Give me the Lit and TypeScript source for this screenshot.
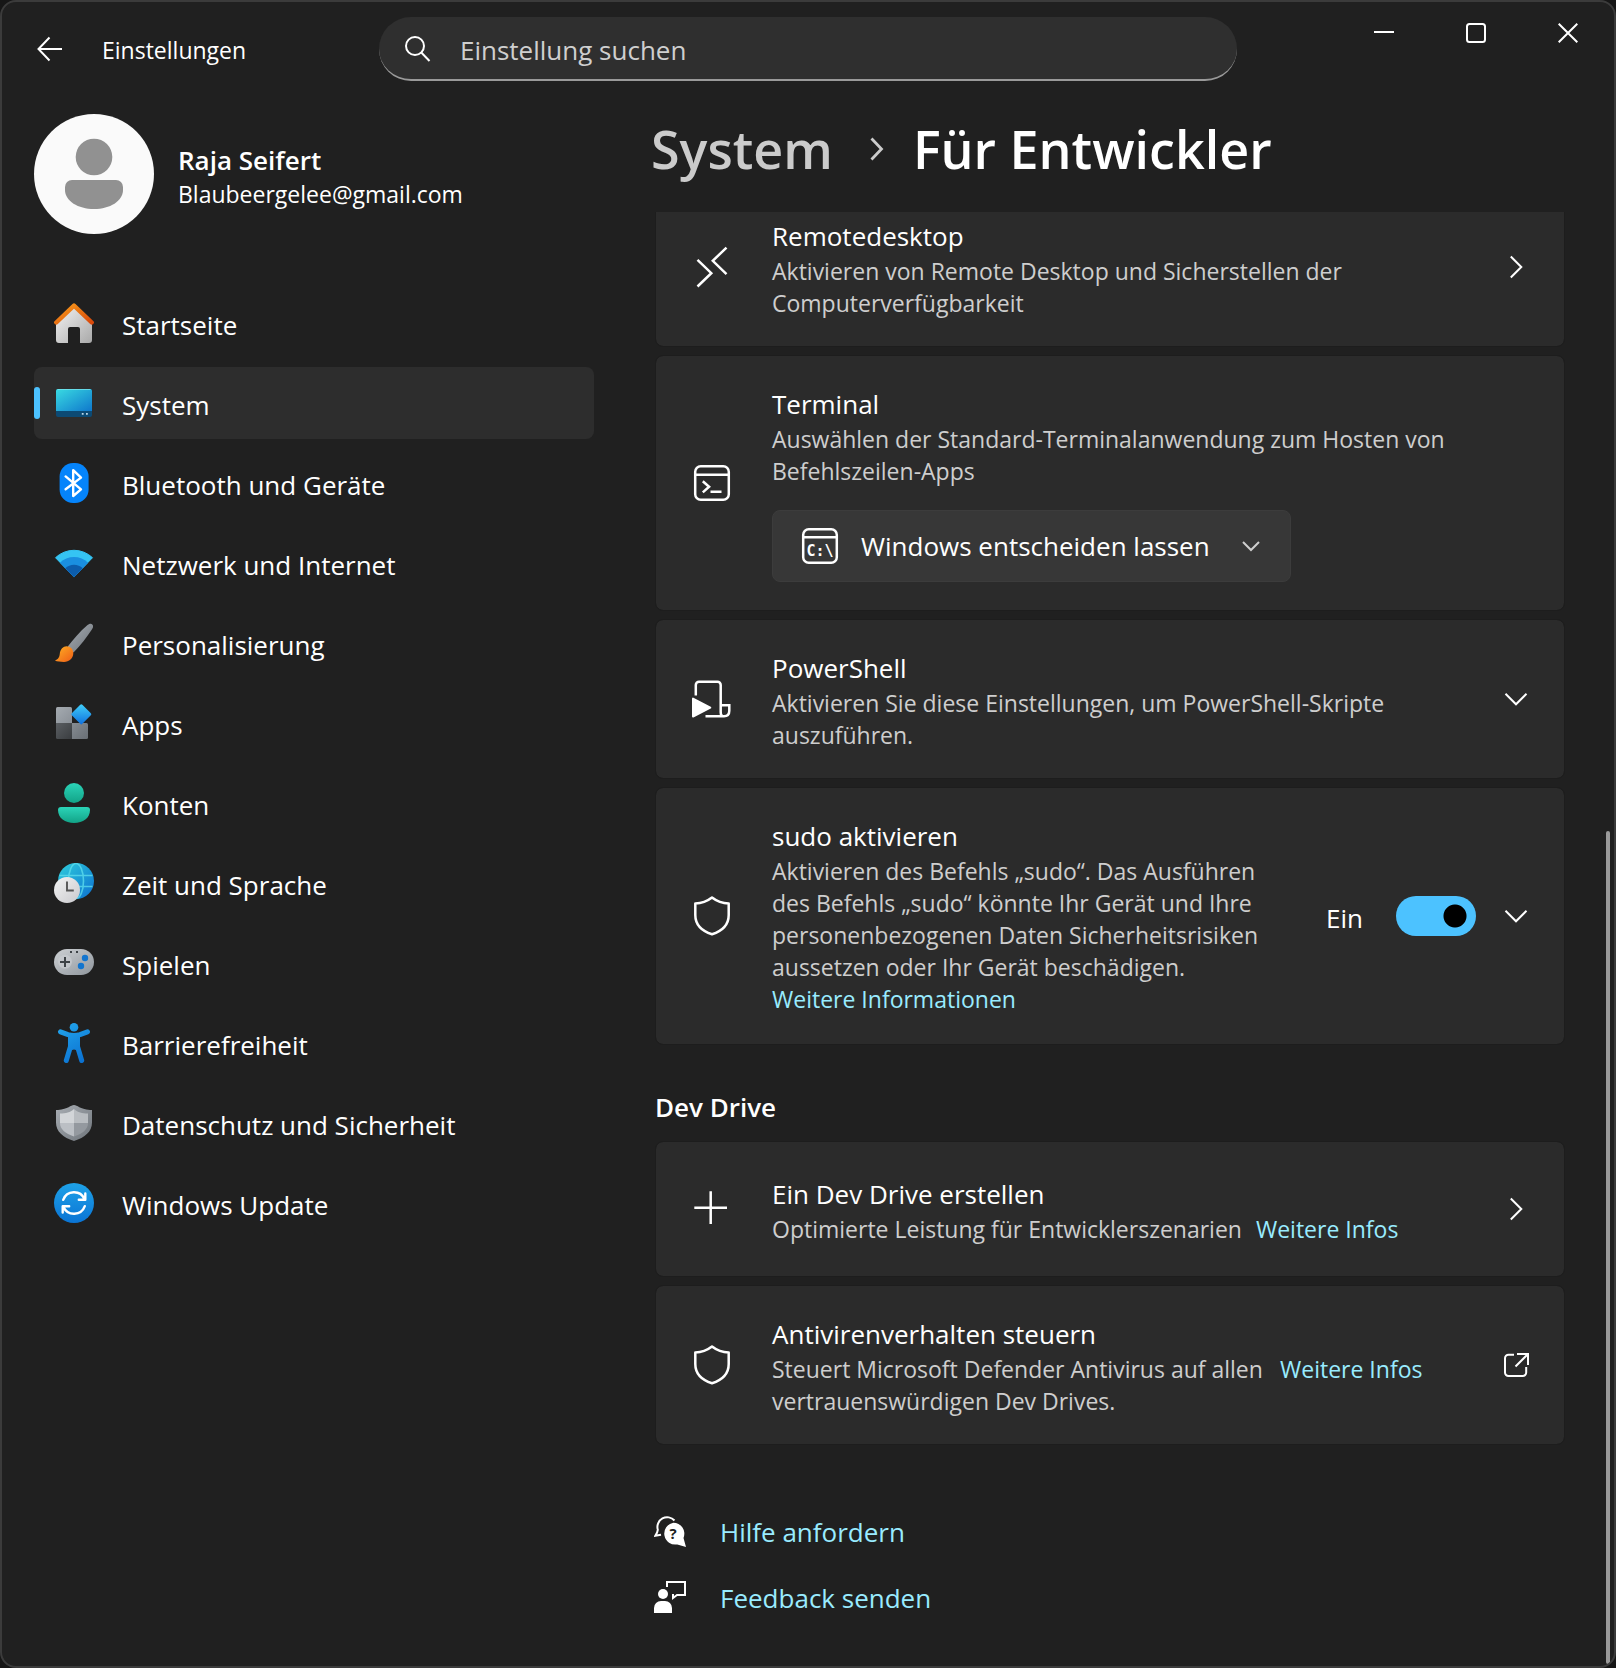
import { LitElement, html, svg, css, nothing } from "lit";
import { customElement, property, state } from "lit/decorators.js";

type NavItem = { id: string; label: string };

const NAV: NavItem[] = [
  { id: "home", label: "Startseite" },
  { id: "system", label: "System" },
  { id: "bluetooth", label: "Bluetooth und Geräte" },
  { id: "network", label: "Netzwerk und Internet" },
  { id: "brush", label: "Personalisierung" },
  { id: "apps", label: "Apps" },
  { id: "accounts", label: "Konten" },
  { id: "time", label: "Zeit und Sprache" },
  { id: "gaming", label: "Spielen" },
  { id: "access", label: "Barrierefreiheit" },
  { id: "privacy", label: "Datenschutz und Sicherheit" },
  { id: "update", label: "Windows Update" },
];

// Two-stop diagonal gradient used by the coloured navigation icons.
const grad = (id: string, from: string, to: string, vertical = false) => svg`
  <linearGradient id=${id} x1="0" y1="0" x2=${vertical ? "0" : "1"} y2="1">
    <stop offset="0" stop-color=${from}></stop>
    <stop offset="1" stop-color=${to}></stop>
  </linearGradient>`;

const NAV_ICONS: Record<string, unknown> = {
  home: svg`
    <defs>${grad("body", "#f4f4f4", "#a9a9a9")}${grad("roof", "#f99d1c", "#d9480a")}</defs>
    <path fill="url(#body)" d="M2 20 20 3.5 38 20v17a3 3 0 0 1-3 3h-9V26a2 2 0 0 0-2-2h-8a2 2 0 0 0-2 2v14H5a3 3 0 0 1-3-3z"/>
    <path fill="none" stroke="url(#roof)" stroke-width="4.4" stroke-linecap="round" stroke-linejoin="round" d="M2.3 19.5 20 2.6l17.7 16.9"/>`,
  system: svg`
    <defs>${grad("screen", "#39dbe2", "#0f78cc")}</defs>
    <rect x="2" y="6" width="36" height="28" rx="2" fill="#0c4a74"/>
    <path fill="url(#screen)" d="M4 6h32a2 2 0 0 1 2 2v20H2V8a2 2 0 0 1 2-2z"/>
    <path fill="none" stroke="#7feaf0" stroke-width="1" opacity=".7" d="M3.5 6.5h33"/>
    <path fill="#b9d7ea" d="M27.8 30h1.8v1.8h-1.8zM32 30h1.8v1.8H32z"/>`,
  bluetooth: svg`
    <rect x="5.6" y="0" width="29" height="40" rx="13.5" fill="#0584fb"/>
    <path fill="none" stroke="#fff" stroke-width="2.4" stroke-linejoin="round" stroke-linecap="round" d="M11.6 13.4 27 26.3 19.2 33V7.2L27 14.6 11.6 26.2"/>`,
  network: svg`
    <path fill="#35c4f3" stroke="#35c4f3" stroke-linejoin="round" d="M20 33.8 1.5 14.7a26.8 26.8 0 0 1 37 0z"/>
    <path fill="#1a8fe0" d="M20 34.3 5.9 19.7a20.3 20.3 0 0 1 28.2 0z"/>
    <path fill="#0c5cab" d="M20 34.3 11.2 25.2a12.7 12.7 0 0 1 17.6 0z"/>`,
  brush: svg`
    <defs>${grad("handle", "#a7adb3", "#6d737a")}${grad("bristle", "#ffb224", "#ee5d17")}</defs>
    <path fill="url(#handle)" d="M13.8 23.6C19 16.5 26 8.500 33 2.500 35 .8 37 .2 38.300 1.400c1.300 1.300.9 3.300-.6 5.400C33 14 26.500 22.500 19.500 29.500z"/>
    <path fill="url(#bristle)" d="M.9 37.600C4.600 36.200 5.400 34 5.800 30.800 6.200 26.200 9.200 23.200 12.600 23.200c4 0 6.700 3.200 6.700 6.900 0 5.300-4.300 8.900-9.300 8.900-3.600 0-6.900-.3-9.100-1.400z"/>`,
  apps: svg`
    <defs>${grad("dia", "#41d0fa", "#0f6fde")}${grad("sq", "#a5abb1", "#8a9097")}${grad("sqd", "#5a5e62", "#3a3d40")}${grad("sqm", "#868c92", "#686e74")}</defs>
    <path fill="url(#sq)" d="M3.500 4H16.500A1.500 1.500 0 0 1 18 5.500V20H2V5.500A1.500 1.500 0 0 1 3.500 4z"/>
    <path fill="url(#sqd)" d="M2 20h16v16H3.500A1.500 1.500 0 0 1 2 34.500z"/>
    <path fill="url(#sqm)" d="M18 20h14.500a1.500 1.500 0 0 1 1.500 1.500v13a1.500 1.500 0 0 1-1.500 1.500H18z"/>
    <rect x="19.800" y="3.800" width="15" height="15" rx="1.500" transform="rotate(45 27.300 11.300)" fill="url(#dia)"/>`,
  accounts: svg`
    <defs>${grad("acc", "#2bd4b8", "#12a387", true)}</defs>
    <circle cx="20" cy="10" r="10" fill="url(#acc)"/>
    <path fill="url(#acc)" d="M7 24h26a3 3 0 0 1 3 3c0 8-7 13-16 13S4 35 4 27a3 3 0 0 1 3-3z"/>`,
  time: svg`
    <defs>${grad("globe", "#2fcfdc", "#0c6fd0")}${grad("clock", "#f3f3f3", "#c9c9cd")}</defs>
    <circle cx="22" cy="18" r="18" fill="url(#globe)"/>
    <g fill="none" stroke="#5fe0ee" stroke-width="1.600" opacity=".75">
      <path d="M5.500 12.500h33M10 23.500h28.500"/><ellipse cx="22" cy="18" rx="7.500" ry="17.500"/>
    </g>
    <circle cx="13" cy="27" r="13" fill="url(#clock)"/>
    <path fill="none" stroke="#555" stroke-width="1.900" d="M13 18.500v9h6.800"/>`,
  gaming: svg`
    <defs>${grad("pad", "#cdd0d3", "#8f969d")}</defs>
    <rect x="0" y="6" width="40" height="26" rx="13" fill="url(#pad)"/>
    <circle cx="11" cy="18.800" r="7" fill="#c9ccd0" opacity=".7"/>
    <path stroke="#3d4246" stroke-width="2" d="M6 19h10M11 14v10"/>
    <circle cx="31" cy="15" r="3.200" fill="#1275cf"/><circle cx="27" cy="23" r="3.200" fill="#1275cf"/>
    <path fill="#3d4246" d="M16 8h2v2h-2zM22 8h2v2h-2z"/>`,
  access: svg`
    <defs><linearGradient id="man" gradientUnits="userSpaceOnUse" x1="8" y1="0" x2="30" y2="40">
      <stop offset="0" stop-color="#22a5ec"></stop><stop offset="1" stop-color="#0a6fd0"></stop></linearGradient></defs>
    <circle cx="20" cy="4.300" r="4.300" fill="url(#man)"/>
    <path fill="url(#man)" d="M14 10h12v17h-4l-2-.6-2 .6h-4z"/>
    <path fill="none" stroke="url(#man)" stroke-width="5" stroke-linecap="round" stroke-linejoin="round" d="M6.500 8.800 14 11.600q6 1.600 12 0l7.500-2.800M16.500 23.500l-4.200 14M23.500 23.500l4.200 14"/>`,
  privacy: svg`
    <defs>${grad("sh", "#a8adb3", "#6f757b")}</defs>
    <path fill="url(#sh)" d="M20 2c3.500 0 5.500 4 16 5h2v12.500C38 28.500 31 34.500 20 38 9 34.500 2 28.500 2 19.500V7h2C14.500 6 16.500 2 20 2z"/>
    <path fill="#d2d5d8" d="M20 6v14H6V10.500C12 10.500 16 9.500 20 6z"/>
    <path fill="#b9bdc1" d="M20 6v14h14v-9.500C28 10.500 24 9.500 20 6z"/>
    <path fill="#bbbfc4" d="M6 20h14v13.500C11 30.500 6 26 6 20z"/>
    <path fill="#94999f" d="M34 20H20v13.500C29 30.500 34 26 34 20z"/>`,
  update: svg`
    <defs>${grad("upd", "#1ea2e8", "#0a74d4", true)}</defs>
    <circle cx="20" cy="20" r="20" fill="url(#upd)"/>
    <path fill="none" stroke="#fff" stroke-width="2.400" stroke-linejoin="round" stroke-linecap="round" d="M9.200 16.800A11.500 11.500 0 0 1 30.500 16M31.300 10.500v6.300h-6.500M30.800 23.200A11.500 11.500 0 0 1 9.500 24M8.700 29.500v-6.300h6.500"/>`,
};

const LINE_ICONS: Record<string, unknown> = {
  remote: svg`<path d="M5.500 12.800 19.300 26.200 5.500 39.500M34.500.6 20.800 13.800l13.700 13.300"/>`,
  terminal: svg`<rect x="3.200" y="3.200" width="33.600" height="33.600" rx="5.500"/><path d="M3.500 11.700h33M10.800 18.200l6.300 5.600-6.300 5.600M18.500 28.800h11"/>`,
  cmd: svg`<rect x="3.200" y="3.200" width="33.600" height="33.600" rx="5.500"/><path d="M3.500 11.300h33"/><text class="glyph" x="20" y="29.500">C:\\</text>`,
  script: svg`<path d="M3.800 16.500V6a3.200 3.200 0 0 1 3.200-3.200h18.500a3.200 3.200 0 0 1 3.200 3.200v27.200c0 2.400 1 4.100 3.300 4.100M29 26.300h8.300v5.500c0 3.500-1.800 5.500-5.300 5.500H13.500"/>
    <path fill="#fff" stroke-width="2" stroke-linejoin="round" d="M1 19.600v18L18.300 28.600z"/>`,
  shield: svg`<path stroke-linejoin="round" d="M20 1.600C15 5.500 9 7.400 3.300 7.500V19c0 9.500 6.500 16 16.700 19.300C30.200 35 36.700 28.500 36.700 19V7.500C31 7.400 25 5.500 20 1.600z"/>`,
  plus: svg`<path d="M2.300 18.700H35M18.700 2.300V35"/>`,
};

const lineIcon = (name: string) => html`<svg class="line" viewBox="0 0 40 40" width="40" height="40" aria-hidden="true">${LINE_ICONS[name]}</svg>`;

const chevronRight = svg`<path d="m6.800 1.500 10.500 10.500L6.800 22.500"/>`;
const chevronDown = svg`<path d="M1.500 6.800 12 17.300 22.500 6.800"/>`;
const external = svg`<path d="M10 1.800H4.500A3.500 3.500 0 0 0 1 5.300v14.200A3.500 3.500 0 0 0 4.500 23h14.200a3.500 3.500 0 0 0 3.500-3.500V14M13 1h11v11M24 1 11.500 13.500"/>`;
const endIcon = (shape: unknown) => html`<svg class="end" viewBox="0 0 24 24" width="24" height="24" aria-hidden="true">${shape}</svg>`;

@customElement("setting-card")
class SettingCard extends LitElement {
  @property() heading = "";
  @property() icon = "";
  @property() end = "";

  static styles = css`
    :host { display: block; }
    .card {
      box-sizing: border-box;
      display: flex;
      align-items: center;
      gap: 40px;
      min-height: 136px;
      padding: 27px 36px;
      border: 1px solid #1d1d1d;
      border-radius: 8px;
      background: #2b2b2b;
      background-clip: padding-box;
    }
    .line { flex: none; fill: none; stroke: #fff; stroke-width: 2.5; overflow: visible; }
    .text { flex: 1; min-width: 0; padding-top: 3px; }
    .title { margin: 0; font-size: 26px; line-height: 37px; font-weight: 400; color: #fff; }
    .end { display: block; fill: none; stroke: #fff; stroke-width: 2; overflow: visible; }
    .go { padding: 0; border: 0; background: none; flex: none; }
  `;

  render() {
    const shape = this.end === "right" ? chevronRight : this.end === "down" ? chevronDown : external;
    return html`<section class="card">
      ${lineIcon(this.icon)}
      <div class="text">
        <h3 class="title">${this.heading}</h3>
        <slot></slot>
      </div>
      <slot name="action"></slot>
      ${this.end ? html`<button class="go" aria-label=${this.heading}>${endIcon(shape)}</button>` : nothing}
    </section>`;
  }
}

@customElement("app-root")
class AppRoot extends LitElement {
  @state() private current = "system";
  @state() private sudo = true;

  static styles = css`
    :host {
      display: block;
      background: #161616;
      color: #fff;
      font-family: "Open Sans", "Noto Sans", sans-serif;
    }
    a { color: #99ebff; text-decoration: none; }
    button, input, select { font-family: inherit; color: inherit; }
    .window {
      box-sizing: border-box;
      min-height: 100vh;
      display: flex;
      flex-direction: column;
      border: 2px solid #3b3b3b;
      border-radius: 16px;
      background: #202020;
      overflow: hidden;
    }
    .bar {
      display: grid;
      grid-template-columns: 1fr minmax(0, 858px) 1fr;
      align-items: start;
      height: 96px;
    }
    .lead { display: flex; align-items: center; gap: 39px; height: 94px; padding-left: 35px; }
    .plain { padding: 0; border: 0; background: none; display: flex; align-items: center; justify-content: center; }
    .stroke { display: block; fill: none; stroke: #fff; stroke-width: 2; }
    .app { padding-top: 2px; font-size: 23px; line-height: 32px; }
    .search {
      box-sizing: border-box;
      display: flex;
      align-items: center;
      gap: 29px;
      height: 64px;
      margin-top: 15px;
      padding: 2px 24px 0;
      border-radius: 32px;
      background: #2f2f2f;
      border-bottom: 2px solid #9a9a9a;
    }
    .query { flex: 1; min-width: 0; padding: 2px 0 0; border: 0; outline: 0; background: none; font-size: 26px; line-height: 36px; }
    .query::placeholder { color: #cfcfcf; opacity: 1; }
    .controls { display: flex; justify-content: flex-end; }
    .controls .plain { width: 92px; height: 62px; }

    .body { flex: 1; display: flex; padding-left: 32px; }
    .side { flex: none; width: 560px; padding-top: 16px; }
    .user { display: flex; align-items: center; gap: 24px; }
    .who { padding-top: 4px; }
    .name { font-size: 26px; line-height: 36px; font-weight: 600; }
    .mail { font-size: 23px; line-height: 32px; }
    .nav { display: flex; flex-direction: column; gap: 8px; margin-top: 53px; }
    .item {
      position: relative;
      display: flex;
      align-items: center;
      gap: 28px;
      height: 72px;
      padding: 0 20px;
      border-radius: 8px;
      color: #fff;
      font-size: 26px;
      line-height: 36px;
    }
    .item span { padding-top: 4px; }
    .item.on { background: #2d2d2d; }
    .item.on::before {
      content: "";
      position: absolute;
      left: 0;
      top: 20px;
      width: 6px;
      height: 32px;
      border-radius: 3px;
      background: #4cc2ff;
    }
    .main { flex: 1; min-width: 0; display: flex; flex-direction: column; padding: 0 41px 0 61px; }
    .crumbs { display: flex; align-items: center; gap: 32px; height: 102px; margin: 0 0 12px -4px; font-size: 52px; line-height: 72px; font-weight: 600; }
    .crumbs a { color: #cbcbcb; }
    .crumbs h1 { margin: 0 0 0 -8px; font: inherit; }
    .view { overflow: hidden; }
    .list { display: flex; flex-direction: column; gap: 8px; }
    .list.scrolled { margin-top: -25px; }
    .desc { margin: 0; color: #cecece; font-size: 23px; line-height: 32px; }
    .row { display: flex; gap: 14px; font-size: 23px; line-height: 32px; }
    .row a { flex: none; }
    .more { padding-bottom: 2px; font-size: 23px; line-height: 32px; }
    .narrow { max-width: 494px; }
    .group { margin: 44px 0 16px; font-size: 26px; line-height: 36px; font-weight: 600; }
    .pick { display: grid; align-items: center; margin: 23px 0 1px; width: 519px; max-width: 100%; height: 72px; }
    .pick > * { grid-area: 1 / 1; }
    .pick .line { margin-left: 28px; fill: none; stroke: #fff; stroke-width: 2.5; pointer-events: none; z-index: 1; }
    .pick .down { justify-self: end; margin-right: 30px; pointer-events: none; z-index: 1; }
    .glyph { font: 700 15px "DejaVu Sans Mono", monospace; fill: #fff; stroke: none; text-anchor: middle; }
    .box {
      appearance: none;
      width: 100%;
      height: 72px;
      padding: 0 60px 0 88px;
      border: 1px solid #3c3c3c;
      border-radius: 8px;
      background: #373737;
      font-size: 26px;
    }
    .toggle { display: flex; align-items: center; gap: 33px; margin-right: -12px; font-size: 26px; line-height: 36px; }
    .toggle span { padding-top: 4px; }
    .switch { appearance: none; margin: 0; width: 80px; height: 40px; border-radius: 20px; background: radial-gradient(circle at 59px 20px, #000 11px, #4cc2ff 12px); }
    .switch:not(:checked) { background: radial-gradient(circle at 21px 20px, #cecece 11px, #3a3a3a 12px); }
    .help { display: flex; flex-direction: column; gap: 28px; margin: 67px 0 36px; }
    .help a { display: flex; align-items: center; gap: 34px; font-size: 26px; line-height: 36px; margin-left: -1px; }
    .help span { padding-top: 2px; }
    .ask { font: 700 15px "Open Sans", sans-serif; fill: #202020; text-anchor: middle; }
    .track { flex: none; display: flex; align-items: flex-end; padding: 114px 4px 2px 0; }
    .thumb { width: 4px; height: 57.4%; border-radius: 2px; background: #9a9a9a; }
  `;

  private go(e: Event, id: string) {
    e.preventDefault();
    this.current = id;
  }

  render() {
    return html`<div class="window">
      <header class="bar">
        <div class="lead">
          <button class="plain" aria-label="Zurück"><svg class="stroke" width="26" height="26" viewBox="0 0 26 26"><path d="M25 13H1.500M12.500 1.500 1.500 13l11 11.500"/></svg></button>
          <span class="app">Einstellungen</span>
        </div>
        <label class="search">
          <svg class="stroke" width="28" height="28" viewBox="0 0 28 28"><circle cx="12" cy="11" r="9"/><path d="m18.300 17.500 8.200 8.500"/></svg>
          <input class="query" type="text" placeholder="Einstellung suchen" aria-label="Einstellung suchen" />
        </label>
        <div class="controls">
          <button class="plain" aria-label="Minimieren"><svg class="stroke" width="20" height="20" viewBox="0 0 20 20"><path d="M0 9h20"/></svg></button>
          <button class="plain" aria-label="Maximieren"><svg class="stroke" width="20" height="20" viewBox="0 0 20 20"><rect x="1" y="1" width="18" height="18" rx="2.500"/></svg></button>
          <button class="plain" aria-label="Schließen"><svg class="stroke" width="20" height="20" viewBox="0 0 20 20"><path d="m.7.7 18.600 18.600M19.300.7.7 19.300"/></svg></button>
        </div>
      </header>
      <div class="body">
        <aside class="side">
          <div class="user">
            <svg width="120" height="120" viewBox="0 0 120 120" aria-hidden="true">
              <circle cx="60" cy="60" r="60" fill="#fafafa"/>
              <circle cx="60" cy="43" r="18.300" fill="#919191"/>
              <path fill="#919191" d="M38 66h44a7 7 0 0 1 7 7v3c0 11-13 19-29 19s-29-8-29-19v-3a7 7 0 0 1 7-7z"/>
            </svg>
            <div class="who">
              <div class="name">Raja Seifert</div>
              <div class="mail">Blaubeergelee@gmail.com</div>
            </div>
          </div>
          <nav class="nav">
            ${NAV.map((n) => html`<a href="#" class=${n.id === this.current ? "item on" : "item"} @click=${(e: Event) => this.go(e, n.id)}>
              <svg width="40" height="40" viewBox="0 0 40 40" aria-hidden="true">${NAV_ICONS[n.id]}</svg>
              <span>${n.label}</span>
            </a>`)}
          </nav>
        </aside>
        <main class="main">
          <div class="crumbs">
            <a href="#">System</a>
            <svg class="stroke" width="24" height="24" viewBox="0 0 24 24" aria-hidden="true"><path stroke="#cbcbcb" stroke-width="2.800" d="m6.500 1.500 10 10.500-10 10.500"/></svg>
            <h1>Für Entwickler</h1>
          </div>
          <div class="view">
            <div class="list scrolled">
              <setting-card heading="Remotedesktop" icon="remote" end="right">
                <p class="desc">Aktivieren von Remote Desktop und Sicherstellen der Computerverfügbarkeit</p>
              </setting-card>
              <setting-card heading="Terminal" icon="terminal">
                <p class="desc">Auswählen der Standard-Terminalanwendung zum Hosten von Befehlszeilen-Apps</p>
                <div class="pick">
                  ${lineIcon("cmd")}
                  <select class="box" aria-label="Terminal"><option>Windows entscheiden lassen</option></select>
                  <svg class="stroke down" width="20" height="20" viewBox="0 0 20 20" aria-hidden="true"><path stroke="#cecece" d="m2 6 8 8 8-8"/></svg>
                </div>
              </setting-card>
              <setting-card heading="PowerShell" icon="script" end="down">
                <p class="desc">Aktivieren Sie diese Einstellungen, um PowerShell-Skripte auszuführen.</p>
              </setting-card>
              <setting-card heading="sudo aktivieren" icon="shield" end="down">
                <p class="desc">Aktivieren des Befehls „sudo“. Das Ausführen des Befehls „sudo“ könnte Ihr Gerät und Ihre personenbezogenen Daten Sicherheitsrisiken aussetzen oder Ihr Gerät beschädigen.</p>
                <div class="more"><a href="#">Weitere Informationen</a></div>
                <label class="toggle" slot="action">
                  <span>${this.sudo ? "Ein" : "Aus"}</span>
                  <input class="switch" type="checkbox" role="switch" .checked=${this.sudo}
                    @change=${(e: Event) => (this.sudo = (e.target as HTMLInputElement).checked)} />
                </label>
              </setting-card>
            </div>
            <h2 class="group">Dev Drive</h2>
            <div class="list">
              <setting-card heading="Ein Dev Drive erstellen" icon="plus" end="right">
                <div class="row"><p class="desc">Optimierte Leistung für Entwicklerszenarien</p><a href="#">Weitere Infos</a></div>
              </setting-card>
              <setting-card heading="Antivirenverhalten steuern" icon="shield" end="external">
                <div class="row"><p class="desc narrow">Steuert Microsoft Defender Antivirus auf allen vertrauenswürdigen Dev Drives.</p><a href="#">Weitere Infos</a></div>
              </setting-card>
            </div>
          </div>
          <div class="help">
            <a href="#">
              <svg width="32" height="32" viewBox="0 0 32 32" aria-hidden="true">
                <path fill="none" stroke="#fff" stroke-width="2" d="M20.500 5.500A9.800 9.800 0 0 0 3.800 14.800C3.600 17 2.500 19 1.300 20.800L7 19.800"/>
                <path fill="#fff" d="M19.300 7.700a11 11 0 0 1 10.200 15.200L32 32l-8.700-2.600A11 11 0 1 1 19.300 7.700z"/>
                <text class="ask" x="19" y="24">?</text>
              </svg><span>Hilfe anfordern</span></a>
            <a href="#">
              <svg width="32" height="32" viewBox="0 0 32 32" aria-hidden="true">
                <path fill="none" stroke="#fff" stroke-width="2" d="M13 6V1h18v13h-8l-4 3v-4"/>
                <circle cx="9" cy="13" r="5" fill="#fff"/>
                <path fill="#fff" d="M0 32v-5a7 7 0 0 1 7-7h4a7 7 0 0 1 7 7v5z"/>
              </svg><span>Feedback senden</span></a>
          </div>
        </main>
        <div class="track"><div class="thumb"></div></div>
      </div>
    </div>`;
  }
}
